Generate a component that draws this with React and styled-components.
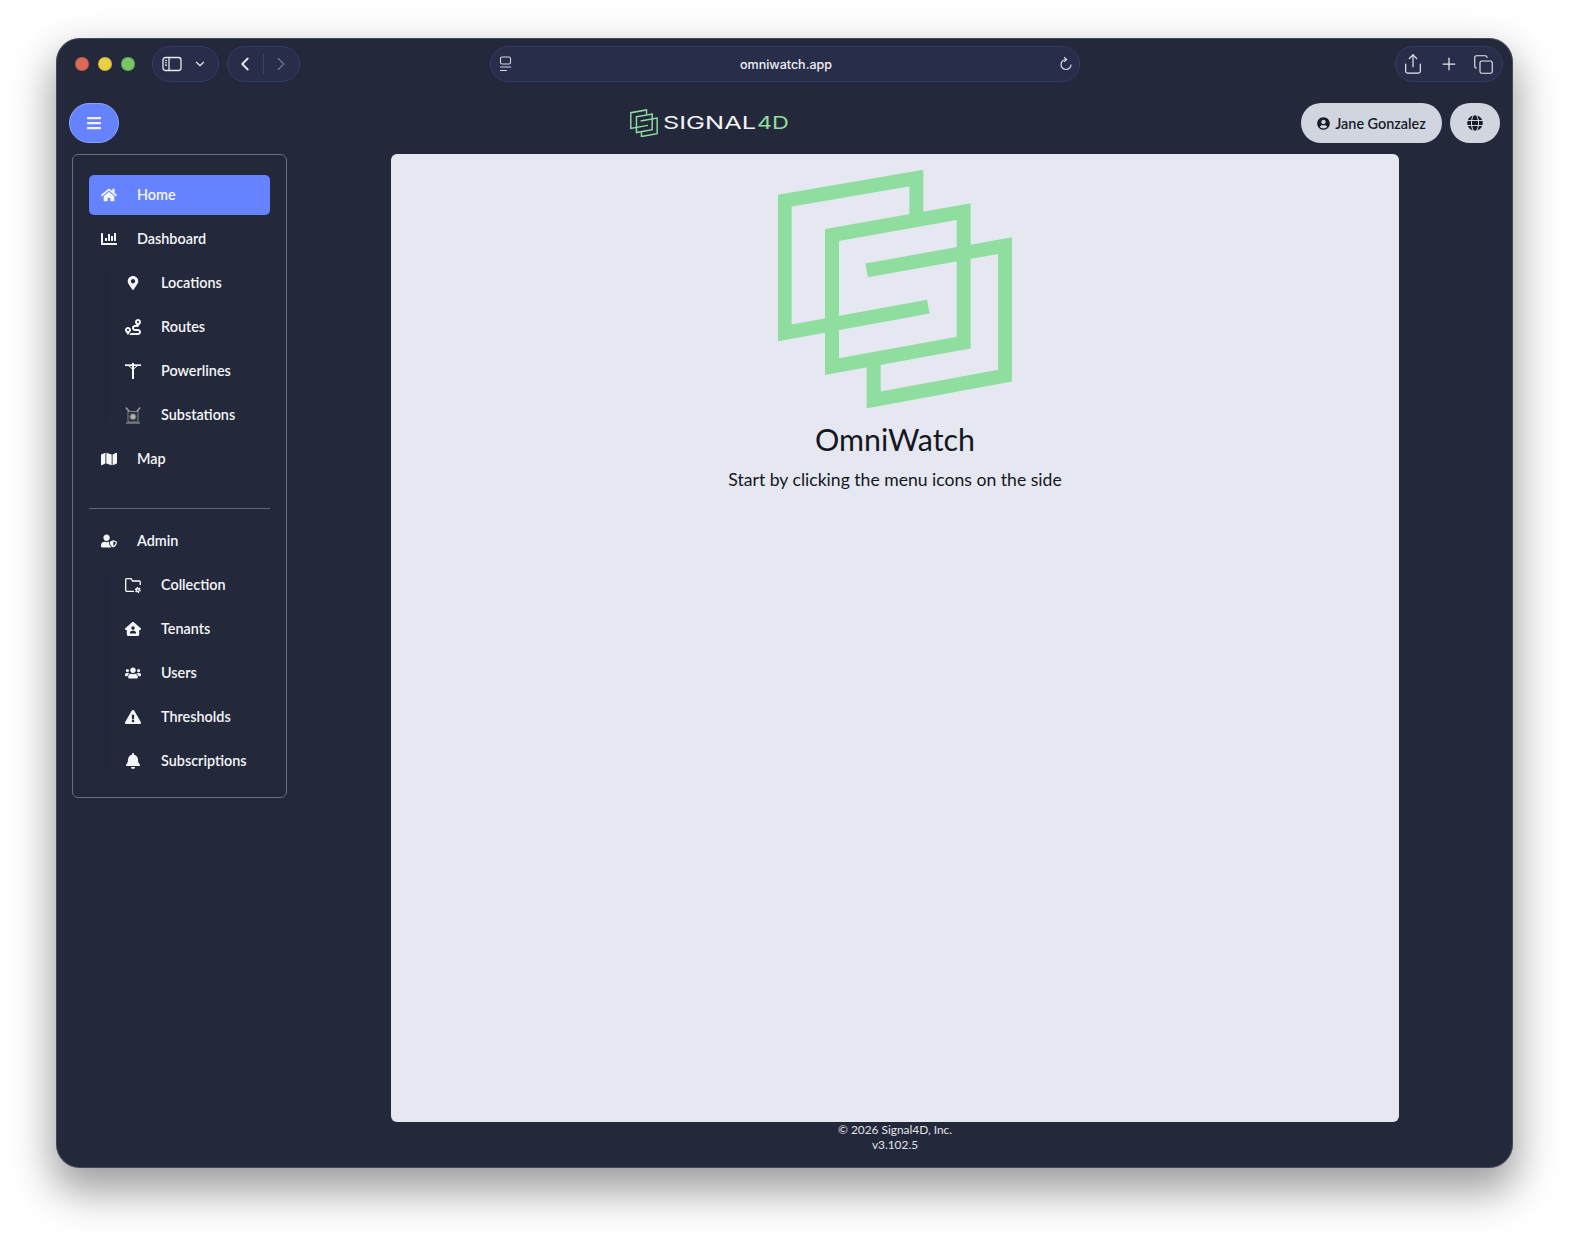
import React from "react";
import styled, { createGlobalStyle } from "styled-components";
import {
  FaHome, FaChartBar, FaMapMarkerAlt, FaRoute, FaMap, FaUserShield,
  FaUsers, FaExclamationTriangle, FaBell, FaBars, FaUserCircle, FaGlobe,
} from "react-icons/fa";
import { FaHouseUser } from "react-icons/fa6";
import { ChevronDown, ChevronLeft, ChevronRight, Share, Plus, Copy } from "lucide-react";

const Global = createGlobalStyle`
  html, body { margin: 0; padding: 0; background: #fff; }
  body { font-family: Lato, "Liberation Sans", sans-serif; }
  * { box-sizing: border-box; }
`;

const Page = styled.div`
  width: 1569px;
  height: 1242px;
  padding: 38px 56px 74px 56px;
  overflow: hidden;
`;
const Win = styled.div`
  height: 1130px;
  background: #23283b;
  border-radius: 24px;
  display: flex;
  flex-direction: column;
  box-shadow: inset 0 0 0 1px rgba(120, 122, 130, 0.4), 0 20px 42px 4px rgba(0, 0, 0, 0.38);
`;
const Chrome = styled.div`
  display: flex;
  align-items: center;
  height: 36px;
  margin-top: 8px;
  padding: 0 10px 0 19px;
  flex: none;
`;
const Lights = styled.div`
  display: flex;
  gap: 9px;
  margin-right: 17px;
`;
const Light = styled.span`
  width: 14px;
  height: 14px;
  border-radius: 50%;
  background: ${(p) => p.$c};
  box-shadow: inset 0 0 0 1px rgba(0, 0, 0, 0.12);
`;
const Pill = styled.div`
  height: 36px;
  width: ${(p) => p.$w}px;
  margin-right: ${(p) => p.$mr || 0}px;
  border-radius: 18px;
  background: #282d49;
  border: 1px solid #323c68;
  color: #e8e9ee;
  display: flex;
  align-items: center;
  justify-content: space-between;
  padding: ${(p) => p.$pad || "0 12px"};
  flex: none;
`;
const Sep = styled.span`
  width: 1px;
  height: 20px;
  background: #3f4460;
`;
const Address = styled(Pill)`
  margin-left: 190px;
  margin-right: auto;
  padding: 0 6px 0 8px;
`;
const Url = styled.span`
  font: 500 12.5px Inter, sans-serif;
  color: #f1f2f5;
`;
const Bar = styled.div`
  display: flex;
  align-items: center;
  height: 40px;
  margin-top: 21px;
  padding: 0 13px;
  flex: none;
`;
const MenuButton = styled.button`
  width: 50px;
  height: 40px;
  border-radius: 20px;
  border: 1px solid #8da2ff;
  background: #6582ff;
  color: #f4ecff;
  display: flex;
  align-items: center;
  justify-content: center;
  padding: 0;
`;
const Brand = styled.div`
  margin-left: 511px;
  margin-right: auto;
  display: flex;
  align-items: center;
  gap: 5px;
`;
const GrayButton = styled.button`
  height: 40px;
  border-radius: 20px;
  border: none;
  background: #d1d5e0;
  color: #181b26;
  display: flex;
  align-items: center;
  justify-content: center;
  gap: 5px;
  width: ${(p) => p.$w}px;
  margin-left: ${(p) => p.$ml || 0}px;
  font: 600 14.4px Lato, sans-serif;
  padding: 0;
`;
const Body = styled.div`
  display: flex;
  flex: 1;
  margin-top: 11px;
  padding-left: 16px;
  min-height: 0;
`;
const Side = styled.nav`
  width: 215px;
  height: 644px;
  border: 1px solid #6a6d7a;
  border-radius: 6px;
  padding: 20px 16px 16px;
  flex: none;
`;
const Group = styled.div`
  display: flex;
  flex-direction: column;
  gap: 4px;
`;
const Sub = styled(Group)`
  position: relative;
  margin-left: 16px;
  padding-left: 8px;
  &::before {
    content: "";
    position: absolute;
    left: 0;
    top: 10px;
    bottom: 13px;
    width: 1px;
    background: #20243a;
  }
`;
const Item = styled.a`
  height: 40px;
  display: flex;
  align-items: center;
  gap: 20px;
  padding-left: 12px;
  border-radius: 5px;
  color: #f5f6f8;
  background: ${(p) => (p.$active ? "#6582ff" : "transparent")};
`;
const ItemLabel = styled.span`
  font-size: 14.4px;
  font-weight: 600;
  margin-top: -2px;
`;
const IconBox = styled.span`
  width: 16px;
  height: 16px;
  display: flex;
  align-items: center;
  justify-content: center;
  flex: none;
`;
const Divider = styled.hr`
  border: none;
  height: 1px;
  background: #62656f;
  margin: 29px 0 12px;
`;
const Column = styled.div`
  margin-left: 104px;
  width: 1008px;
  display: flex;
  flex-direction: column;
`;
const Panel = styled.main`
  height: 968px;
  background: #e5e8f0;
  border-radius: 6px;
  padding-top: 16px;
  display: flex;
  flex-direction: column;
  align-items: center;
  color: #15171e;
`;
const Title = styled.h1`
  font-size: 30.4px;
  font-weight: 400;
  line-height: 36px;
  margin: 13px 0 0;
`;
const Lead = styled.p`
  font-size: 17.6px;
  line-height: 27px;
  margin: 9px 0 0;
`;
const Foot = styled.footer`
  text-align: center;
  color: #e3e4e8;
  font-size: 11.9px;
  line-height: 15px;
`;

const Mark = ({ size, weight = 42, color = "#90de9f" }) => (
  <svg width={size} viewBox="233 60 702 715" fill="none" stroke={color} strokeWidth={weight} strokeLinejoin="miter" style={{ display: "block" }}>
    <path d="M648 195V84L253 152V549L684 470" />
    <path d="M395 255L790 185V578L395 650Z" />
    <path d="M499 361L914 287V677L520 750V640" />
  </svg>
);

const Wordmark = () => (
  <svg width="128" height="20" viewBox="0 0 128 20" style={{ display: "block" }}>
    <text x="0" y="16" textLength="93" lengthAdjust="spacingAndGlyphs" fontFamily="Inter, sans-serif" fontWeight="400" fontSize="17.5" fill="#f3f4f6">SIGNAL</text>
    <text x="94" y="16" textLength="32" lengthAdjust="spacingAndGlyphs" fontFamily="Inter, sans-serif" fontWeight="400" fontSize="17.5" fill="#90de9f">4D</text>
  </svg>
);

const SidebarGlyph = () => (
  <svg width="20" height="16" viewBox="0 0 20 16" fill="none" stroke="currentColor" strokeWidth="1.3">
    <rect x="1" y="1.5" width="18" height="13" rx="2.5" />
    <path d="M7 1.5v13" />
    <path d="M3 4.5h2M3 6.8h2M3 9.1h2" strokeWidth="1.1" />
  </svg>
);

const TabGlyph = () => (
  <svg width="14" height="16" viewBox="0 0 14 16" fill="none" stroke="#d5d7df" strokeWidth="1.1">
    <rect x="1.5" y="1" width="10" height="7" rx="1.6" />
    <path d="M1 11h11M1 14.5h7" />
  </svg>
);

const ReloadGlyph = () => (
  <svg width="14" height="16" viewBox="0 0 14 16" fill="none" stroke="#d5d7df" strokeWidth="1.2">
    <path d="M7 3.5A5 5 0 1 0 12 8.5" />
    <path d="M5.2 1.2L7.6 3.5L5.2 5.8" />
  </svg>
);

const PoleGlyph = () => (
  <svg width="16" height="16" viewBox="0 0 16 16" fill="none" stroke="#fff">
    <path d="M8 0v16" strokeWidth="2" />
    <path d="M0 2.2h16" strokeWidth="1.7" />
    <path d="M4 3L8 6.5L12 3" strokeWidth="1" />
  </svg>
);

const SubstationGlyph = () => (
  <svg width="16" height="17" viewBox="0 0 16 17" fill="none">
    <path d="M.8 .5L5 5.2M15.2 .5L11 5.2" stroke="#9a9ca4" strokeWidth="1.5" />
    <rect x="3" y="4.5" width="10" height="10.5" fill="#2a2b31" stroke="#85868d" />
    <circle cx="8" cy="9.8" r="3.2" fill="#aeb0b6" stroke="#4b4c52" />
    <path d="M1 16h14" stroke="#85868d" strokeWidth="1.4" />
  </svg>
);

const FolderGearGlyph = () => (
  <svg width="16" height="16" viewBox="0 0 16 16" fill="none" stroke="#fff" strokeWidth="1.3">
    <path d="M15.3 8V5a1 1 0 0 0-1-1H7.6L6 1.7H1.7a1 1 0 0 0-1 1v10.6a1 1 0 0 0 1 1H9" />
    <circle cx="12.8" cy="13" r="1.5" strokeWidth="1.3" />
    <circle cx="12.8" cy="13" r="2.5" strokeWidth="1.1" strokeDasharray="1.3 1.3" />
  </svg>
);

const primary = [
  { label: "Home", icon: <FaHome size={16} />, active: true },
  { label: "Dashboard", icon: <FaChartBar size={16} />,
    sub: [
      { label: "Locations", icon: <FaMapMarkerAlt size={14} /> },
      { label: "Routes", icon: <FaRoute size={16} /> },
      { label: "Powerlines", icon: <PoleGlyph /> },
      { label: "Substations", icon: <SubstationGlyph /> },
    ] },
  { label: "Map", icon: <FaMap size={16} /> },
];
const admin = [
  { label: "Admin", icon: <FaUserShield size={16} />,
    sub: [
      { label: "Collection", icon: <FolderGearGlyph /> },
      { label: "Tenants", icon: <FaHouseUser size={16} /> },
      { label: "Users", icon: <FaUsers size={16} /> },
      { label: "Thresholds", icon: <FaExclamationTriangle size={16} /> },
      { label: "Subscriptions", icon: <FaBell size={16} /> },
    ] },
];

const NavTree = ({ items }) => (
  <Group>
    {items.map((it) => (
      <React.Fragment key={it.label}>
        <Item $active={it.active}>
          <IconBox>{it.icon}</IconBox>
          <ItemLabel>{it.label}</ItemLabel>
        </Item>
        {it.sub && (
          <Sub>
            {it.sub.map((s) => (
              <Item key={s.label}>
                <IconBox>{s.icon}</IconBox>
                <ItemLabel>{s.label}</ItemLabel>
              </Item>
            ))}
          </Sub>
        )}
      </React.Fragment>
    ))}
  </Group>
);

export default function App() {
  return (
    <Page>
      <Global />
      <Win>
        <Chrome>
          <Lights>
            <Light $c="#dc6a5b" />
            <Light $c="#e8cf45" />
            <Light $c="#77c563" />
          </Lights>
          <Pill $w={67} $mr={8} $pad="0 11px 0 9px">
            <SidebarGlyph />
            <ChevronDown size={14} strokeWidth={2} />
          </Pill>
          <Pill $w={73} $pad="0 7px 0 6px">
            <ChevronLeft size={22} strokeWidth={2} />
            <Sep />
            <ChevronRight size={22} strokeWidth={1.7} color="#6b6f84" />
          </Pill>
          <Address $w={590}>
            <TabGlyph />
            <Url>omniwatch.app</Url>
            <ReloadGlyph />
          </Address>
          <Pill $w={108} $pad="0 8px 0 6px">
            <Share size={22} strokeWidth={1.3} />
            <Plus size={20} strokeWidth={1.5} />
            <Copy size={21} strokeWidth={1.3} />
          </Pill>
        </Chrome>
        <Bar>
          <MenuButton><FaBars size={16} /></MenuButton>
          <Brand>
            <Mark size={28} weight={36} />
            <Wordmark />
          </Brand>
          <GrayButton $w={141}><FaUserCircle size={13} />Jane Gonzalez</GrayButton>
          <GrayButton $w={50} $ml={8}><FaGlobe size={16} /></GrayButton>
        </Bar>
        <Body>
          <Side>
            <NavTree items={primary} />
            <Divider />
            <NavTree items={admin} />
          </Side>
          <Column>
            <Panel>
              <Mark size={234} />
              <Title>OmniWatch</Title>
              <Lead>Start by clicking the menu icons on the side</Lead>
            </Panel>
            <Foot>
              © 2026 Signal4D, Inc.
              <br />
              v3.102.5
            </Foot>
          </Column>
        </Body>
      </Win>
    </Page>
  );
}
